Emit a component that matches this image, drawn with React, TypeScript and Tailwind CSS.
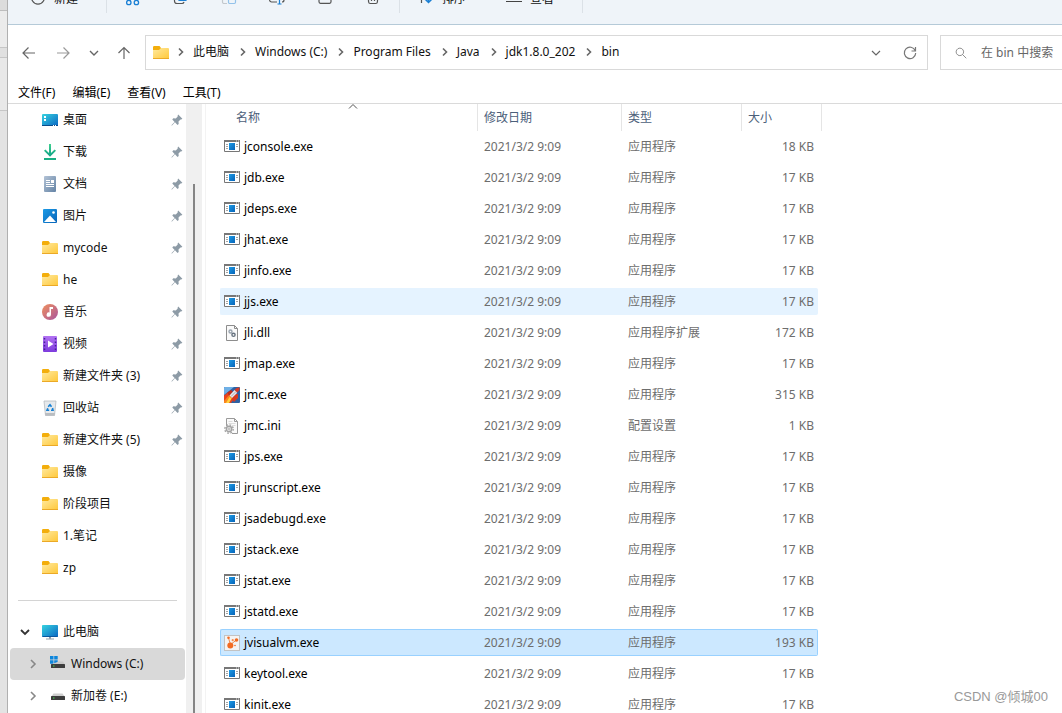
import React from 'react';

type IconKind =
  | 'folder' | 'desktop' | 'download' | 'document' | 'picture' | 'music'
  | 'video' | 'recycle' | 'computer' | 'system-drive' | 'drive';

type FileKind = 'exe' | 'dll' | 'jmc' | 'ini' | 'visualvm';

interface SideItem {
  name: string;
  icon: IconKind;
  pinned?: boolean;
}

interface FileRow {
  name: string;
  kind: FileKind;
  type: string;
  size: string;
  state?: 'hover' | 'selected';
}

const quickAccess: SideItem[] = [
  { name: '桌面', icon: 'desktop', pinned: true },
  { name: '下载', icon: 'download', pinned: true },
  { name: '文档', icon: 'document', pinned: true },
  { name: '图片', icon: 'picture', pinned: true },
  { name: 'mycode', icon: 'folder', pinned: true },
  { name: 'he', icon: 'folder', pinned: true },
  { name: '音乐', icon: 'music', pinned: true },
  { name: '视频', icon: 'video', pinned: true },
  { name: '新建文件夹 (3)', icon: 'folder', pinned: true },
  { name: '回收站', icon: 'recycle', pinned: true },
  { name: '新建文件夹 (5)', icon: 'folder', pinned: true },
  { name: '摄像', icon: 'folder' },
  { name: '阶段项目', icon: 'folder' },
  { name: '1.笔记', icon: 'folder' },
  { name: 'zp', icon: 'folder' }
];

const files: FileRow[] = [
  { name: 'jconsole.exe', kind: 'exe', type: '应用程序', size: '18 KB' },
  { name: 'jdb.exe', kind: 'exe', type: '应用程序', size: '17 KB' },
  { name: 'jdeps.exe', kind: 'exe', type: '应用程序', size: '17 KB' },
  { name: 'jhat.exe', kind: 'exe', type: '应用程序', size: '17 KB' },
  { name: 'jinfo.exe', kind: 'exe', type: '应用程序', size: '17 KB' },
  { name: 'jjs.exe', kind: 'exe', type: '应用程序', size: '17 KB', state: 'hover' },
  { name: 'jli.dll', kind: 'dll', type: '应用程序扩展', size: '172 KB' },
  { name: 'jmap.exe', kind: 'exe', type: '应用程序', size: '17 KB' },
  { name: 'jmc.exe', kind: 'jmc', type: '应用程序', size: '315 KB' },
  { name: 'jmc.ini', kind: 'ini', type: '配置设置', size: '1 KB' },
  { name: 'jps.exe', kind: 'exe', type: '应用程序', size: '17 KB' },
  { name: 'jrunscript.exe', kind: 'exe', type: '应用程序', size: '17 KB' },
  { name: 'jsadebugd.exe', kind: 'exe', type: '应用程序', size: '17 KB' },
  { name: 'jstack.exe', kind: 'exe', type: '应用程序', size: '17 KB' },
  { name: 'jstat.exe', kind: 'exe', type: '应用程序', size: '17 KB' },
  { name: 'jstatd.exe', kind: 'exe', type: '应用程序', size: '17 KB' },
  { name: 'jvisualvm.exe', kind: 'visualvm', type: '应用程序', size: '193 KB', state: 'selected' },
  { name: 'keytool.exe', kind: 'exe', type: '应用程序', size: '17 KB' },
  { name: 'kinit.exe', kind: 'exe', type: '应用程序', size: '17 KB' }
];

const crumbs = ['此电脑', 'Windows (C:)', 'Program Files', 'Java', 'jdk1.8.0_202', 'bin'];
const menus = ['文件(F)', '编辑(E)', '查看(V)', '工具(T)'];

const rowFill = {
  none: 'border-transparent',
  hover: 'border-[#e5f3ff] bg-[#e5f3ff]',
  selected: 'border-[#99d1ff] bg-[#cce8ff]'
};

function Gradients() {
  return (
    <svg width="0" height="0" className="absolute" aria-hidden="true">
      <defs>
        <linearGradient id="g-folder" x1="0" y1="0" x2="1" y2="1">
          <stop offset="0" stopColor="#ffeaa0" />
          <stop offset="1" stopColor="#ffc83a" />
        </linearGradient>
        <linearGradient id="g-screen" x1="0" y1="0" x2="1" y2="1">
          <stop offset="0" stopColor="#36d3e0" />
          <stop offset="1" stopColor="#0b66c3" />
        </linearGradient>
        <linearGradient id="g-doc" x1="0" y1="0" x2="1" y2="1">
          <stop offset="0" stopColor="#b3c3d6" />
          <stop offset="1" stopColor="#6483a5" />
        </linearGradient>
        <linearGradient id="g-blue" x1="0" y1="0" x2="1" y2="1">
          <stop offset="0" stopColor="#1c9be6" />
          <stop offset="1" stopColor="#0763b8" />
        </linearGradient>
        <linearGradient id="g-music" x1="0" y1="0" x2="1" y2="1">
          <stop offset="0" stopColor="#f0905c" />
          <stop offset="1" stopColor="#a9559f" />
        </linearGradient>
        <linearGradient id="g-video" x1="0" y1="0" x2="0" y2="1">
          <stop offset="0" stopColor="#b272f2" />
          <stop offset="1" stopColor="#7d3bdd" />
        </linearGradient>
        <linearGradient id="g-down" x1="0" y1="0" x2="0" y2="1">
          <stop offset="0" stopColor="#3fd08f" />
          <stop offset="1" stopColor="#0fa086" />
        </linearGradient>
      </defs>
    </svg>
  );
}

function PlaceIcon({ kind }: { kind: IconKind }) {
  return (
    <svg width="16" height="16" viewBox="0 0 16 16" className="shrink-0" aria-hidden="true">
      {kind === 'folder' && (
        <>
          <path d="M0 2.200A1.200 1.200 0 0 1 1.200 1h5.300L8 3v3H0z" fill="#f3ae0c" />
          <path d="M0 5h6l2-2h7a1 1 0 0 1 1 1v9a.5.500 0 0 1-.5.500H.5A.5.500 0 0 1 0 13z" fill="url(#g-folder)" />
          <path d="M0 13.500h16" stroke="#eba927" />
        </>
      )}
      {kind === 'desktop' && (
        <>
          <rect y="2" width="16" height="12" rx="1" fill="url(#g-screen)" />
          <path d="M2 4h2v2H2zM2 7h2v2H2z" fill="#fff" />
          <path d="M0 13.500h16" stroke="#0a4d8c" />
          <path d="M11 13.500h1M13 13.500h1" stroke="#fff" />
        </>
      )}
      {kind === 'download' && (
        <>
          <path d="M7 0h2v9l3.600-3.600L14 6.800l-6 6-6-6 1.400-1.400L7 9z" fill="url(#g-down)" />
          <path d="M2 14h12v2H2z" fill="#19ae83" />
        </>
      )}
      {kind === 'document' && (
        <>
          <rect x="2" width="12" height="16" rx="1" fill="url(#g-doc)" />
          <path d="M4 4.500h4M4 6.500h4M4 8.500h8M4 10.500h8" stroke="#fff" />
          <path d="M9 4h3v3H9z" fill="#fff" />
        </>
      )}
      {kind === 'picture' && (
        <>
          <rect x="1" y="1" width="14" height="14" rx="1" fill="url(#g-blue)" />
          <path d="M2 14l6-6.500L14 14z" fill="#fff" />
          <circle cx="11.500" cy="4.500" r="1.300" fill="#fff" />
        </>
      )}
      {kind === 'music' && (
        <>
          <circle cx="8" cy="8" r="8" fill="url(#g-music)" />
          <path d="M7.500 3h3.500v2H9v5.500a2.200 2.200 0 1 1-1.500-2z" fill="#fff" />
        </>
      )}
      {kind === 'video' && (
        <>
          <rect x="1" width="14" height="16" rx="1" fill="url(#g-video)" />
          <path d="M6 4.500L11.500 8 6 11.500z" fill="#fff" />
          <path d="M2.500 2v12M13.500 2v12" stroke="#46209a" strokeWidth="1.500" strokeDasharray="1.500 2" />
        </>
      )}
      {kind === 'recycle' && (
        <>
          <path d="M2 1h12l-1.500 14.500h-9z" fill="#e6e9ec" stroke="#b5babf" strokeWidth=".8" />
          <path d="M3 13h10l-.4 2.500H3.400z" fill="#b9bdc1" />
          <path d="M6.200 6.800L8 4.800l1.500 2M10.500 8l.5 2.300H9M7.200 10.300H5l.8-2.100" fill="none" stroke="#1580d4" strokeWidth="1.600" />
        </>
      )}
      {kind === 'computer' && (
        <>
          <path d="M7 12h2v3H7z" fill="#8b98a5" />
          <path d="M4 15h8" stroke="#a5b0ba" strokeWidth="1.200" />
          <rect y="1" width="16" height="12" rx=".8" fill="url(#g-screen)" />
          <path d="M.5 12.500h15" stroke="#0b579e" />
        </>
      )}
      {kind === 'system-drive' && (
        <>
          <path d="M0 0h3.500v3.500H0zM4.200 0h3.500v3.500H4.200zM0 4.200h3.500v3.500H0zM4.200 4.200h3.500v3.500H4.200z" fill="#0d86dc" />
          <path d="M8.500 5.500h4.500L15 8.500H1z" fill="#c8c8c8" />
          <rect x="1" y="8" width="14" height="4" rx=".6" fill="#3d3d3d" />
          <path d="M3 10h1.500" stroke="#47e052" />
        </>
      )}
      {kind === 'drive' && (
        <>
          <path d="M3.500 5.500h9L15 9H1z" fill="#cfcfcf" />
          <rect x="1" y="8" width="14" height="4" rx=".6" fill="#3d3d3d" />
          <path d="M3 10h1.500" stroke="#47e052" />
        </>
      )}
    </svg>
  );
}

function FileIcon({ kind }: { kind: FileKind }) {
  return (
    <svg width="16" height="16" viewBox="0 0 16 16" className="shrink-0" aria-hidden="true">
      {kind === 'exe' && (
        <>
          <path d="M.5 1.500h15v11H.5z" fill="#fff" stroke="#777" />
          <path d="M0 1h16v2H0z" fill="#777" />
          <path d="M2 5.500h2M2 7.500h2M2 9.500h2M12 5.500h2M12 7.500h2" stroke="#a5a5a5" />
          <path d="M12 2h1M14 2h1" stroke="#fff" strokeWidth=".8" />
          <path d="M5 4h6v7H5z" fill="url(#g-blue)" />
        </>
      )}
      {kind === 'dll' && (
        <>
          <path d="M2.500.5h8l3 3v12h-11z" fill="#fafafa" stroke="#8d8d8d" />
          <path d="M10.500.5v3h3" fill="none" stroke="#8d8d8d" />
          <circle cx="6.500" cy="6.500" r="1.500" fill="none" stroke="#9aa4af" strokeWidth="1.400" />
          <circle cx="9.500" cy="9.800" r="1.600" fill="none" stroke="#65717e" strokeWidth="1.400" />
        </>
      )}
      {kind === 'ini' && (
        <>
          <path d="M2.500 8V.5h8l3 3v12H8" fill="#fafafa" stroke="#9a9a9a" />
          <path d="M10.500.5v3h3" fill="none" stroke="#9a9a9a" />
          <path d="M4.500 3.500h4M4.500 5.500h7M8 7.500h3.500" stroke="#dcdcdc" />
          <circle cx="5" cy="11" r="4.200" fill="none" stroke="#a3a3a3" strokeWidth="1.400" strokeDasharray="1.700 1.600" />
          <circle cx="5" cy="11" r="2.700" fill="#ececec" stroke="#a3a3a3" strokeWidth="1.400" />
          <circle cx="5" cy="11" r="1" fill="#fff" stroke="#8f8f8f" strokeWidth=".6" />
        </>
      )}
      {kind === 'jmc' && (
        <>
          <rect width="16" height="16" rx="1" fill="#2f62a3" />
          <path d="M0 1a1 1 0 0 1 1-1h9L0 8z" fill="#6fb0e6" />
          <path d="M0 8.500L4.500 5l6 6L7 16H0z" fill="#e8431c" />
          <path d="M0 14l5-6 3 3-4 5H0z" fill="#f9861f" />
          <path d="M2 16l3.500-6 2 1.500L5 16z" fill="#ffd23f" />
          <path d="M3.500 5.500L7 3l2 2-4 4z" fill="#c22f1e" />
          <path d="M10.500 7.500L14 7v4l-4 4-2-3z" fill="#d8391f" />
          <path d="M5.500 8.500L10.500 3l2.500.5V6l-5 5z" fill="#eceaec" />
          <path d="M10.500 3l2.200-2 3-.7-.5 3-2.200 2.500z" fill="#d63b25" />
          <path d="M7 9.500l5-5" stroke="#9b99a2" strokeWidth=".8" />
        </>
      )}
      {kind === 'visualvm' && (
        <>
          <rect x=".5" y=".5" width="15" height="15" fill="#f4f4f4" stroke="#c3c3c3" />
          <path d="M6.500 9.500L4.500 3M6.500 9.500L12.500 5" stroke="#f08a4e" />
          <circle cx="6.300" cy="10.500" r="3" fill="#f26b22" />
          <circle cx="4.500" cy="2.800" r="1.300" fill="#f26b22" />
          <circle cx="12.500" cy="5" r="1.800" fill="#f26b22" />
          <circle cx="8.700" cy="5.200" r="1.100" fill="#f58a4d" />
          <circle cx="11" cy="10.500" r=".8" fill="#f26b22" />
        </>
      )}
    </svg>
  );
}

function PinIcon() {
  return (
    <svg width="12" height="12" viewBox="0 0 12 12" className="shrink-0" aria-hidden="true">
      <path d="M7.200.6l4.200 4.100-1.200.9-.7-.1-2 2 .2 2.400-1.200 1L4 8.300 1 11.400l-.5.1.1-.5 3-3.100L1.300 5.400l1-1.100 2.500.2 1.900-2-.1-.8z" fill="#8d9ba6" />
    </svg>
  );
}

function Line({ d, color = '#666', width = 1.2, size = 16 }: { d: string; color?: string; width?: number; size?: number }) {
  return (
    <svg width={size} height={size} viewBox="0 0 16 16" fill="none" stroke={color} strokeWidth={width} className="shrink-0" aria-hidden="true">
      <path d={d} />
    </svg>
  );
}

function Toolbar() {
  return (
    <div className="flex h-[25px] shrink-0 items-end overflow-hidden border-b border-[#b5cad8] bg-[#eff4f9] pb-[11px]">
      <div className="flex h-7 shrink-0 items-center border-r border-[#dbe1e7] pl-[22px] pr-7">
        <button className="flex items-center gap-2">
          <Line d="M8 .5a6.300 6.300 0 1 1-.01 0zM8 4v4M6 6h4" color="#555" />
          新建
        </button>
      </div>
      <div className="flex h-7 shrink-0 items-center gap-8 border-r border-[#dbe1e7] px-[18px]">
        <button aria-label="剪切">
          <svg width="16" height="16" viewBox="0 0 16 16" fill="none" aria-hidden="true">
            <path d="M4 0l6.500 9.500M12 0L5.500 9.500" stroke="#555" />
            <circle cx="3.800" cy="11.500" r="2.200" stroke="#1a7fd4" strokeWidth="1.300" />
            <circle cx="11.400" cy="11.500" r="2.200" stroke="#1a7fd4" strokeWidth="1.300" />
          </svg>
        </button>
        <button aria-label="复制">
          <svg width="16" height="16" viewBox="0 0 16 16" fill="none" aria-hidden="true">
            <path d="M3 3.500A2 2 0 0 0 1.500 5.500V10a2.500 2.500 0 0 0 2.500 2.500h5a2 2 0 0 0 2-1.500" stroke="#555" strokeWidth="1.200" />
            <rect x="5" y="0" width="9" height="10" rx="1.500" fill="#1a7fd4" />
          </svg>
        </button>
        <button aria-label="粘贴">
          <svg width="16" height="16" viewBox="0 0 16 16" fill="none" aria-hidden="true">
            <path d="M11 2.500H3A1.500 1.500 0 0 0 1.500 4v7A1.500 1.500 0 0 0 3 12.500h3" stroke="#c3c8cd" strokeWidth="1.200" />
            <rect x="7.500" y="4.500" width="7" height="8" rx="1.200" stroke="#93c2ea" strokeWidth="1.200" />
          </svg>
        </button>
        <button aria-label="重命名">
          <svg width="16" height="16" viewBox="0 0 16 16" fill="none" aria-hidden="true">
            <path d="M8 3.500H2.500A2 2 0 0 0 .6 5.500V9a2 2 0 0 0 2 2H8M13 3.500a2 2 0 0 1 2 2V9a2 2 0 0 1-2 2" stroke="#555" strokeWidth="1.200" />
            <path d="M10.500 1v11.500M8.500 13h4" stroke="#1a7fd4" strokeWidth="1.200" />
          </svg>
        </button>
        <button aria-label="共享">
          <Line d="M7 3H3.500A1.700 1.700 0 0 0 2 4.700v6A1.700 1.700 0 0 0 3.500 12.400h9a1.700 1.700 0 0 0 1.500-1.700V9" color="#555" />
        </button>
        <button aria-label="删除">
          <Line d="M2 2h12M3 2l.6 9a1.700 1.700 0 0 0 1.600 1.500h5.600a1.700 1.700 0 0 0 1.600-1.500l.6-9M6.500 5.500v4.500M9.500 5.500v4.500" color="#555" />
        </button>
      </div>
      <div className="flex h-7 shrink-0 items-center gap-10 border-r border-[#dbe1e7] pl-[18px] pr-7">
        <button className="flex items-center gap-2">
          <svg width="16" height="16" viewBox="0 0 16 16" fill="none" strokeWidth="1.200" aria-hidden="true">
            <path d="M3.500 12V2M.5 5l3-3 3 3" stroke="#555" />
            <path d="M10.500 1v10.500M7.500 8.500l3 3 3-3" stroke="#1a7fd4" strokeWidth="1.500" />
          </svg>
          排序
        </button>
        <button className="flex items-center gap-2">
          <Line d="M0 2.500h16M0 6.500h16M0 10.500h16" color="#444" />
          查看
        </button>
      </div>
    </div>
  );
}

function AddressRow() {
  return (
    <div className="flex h-[45px] shrink-0 items-end pl-1">
      <div className="flex h-[35px] shrink-0 items-center">
        <button aria-label="后退" className="flex h-8 w-[34px] items-center justify-center">
          <Line d="M14 8H2.500M7.500 2.500L2 8l5.500 5.500" />
        </button>
        <button aria-label="前进" className="flex h-8 w-[34px] items-center justify-center">
          <Line d="M2 8h11.500M8.500 2.500L14 8l-5.500 5.500" color="#999" />
        </button>
        <button aria-label="最近位置" className="flex h-8 w-7 items-center justify-center">
          <Line d="M4 6l4 4 4-4" width={1.4} />
        </button>
        <button aria-label="上移" className="flex h-8 w-8 items-center justify-center">
          <Line d="M8 14V2.500M2.500 8L8 2.500 13.500 8" />
        </button>
      </div>
      <div className="ml-[5px] flex h-[35px] min-w-0 flex-1 items-center border border-[#d9d9d9] pl-[7px]">
        <PlaceIcon kind="folder" />
        <nav aria-label="路径" className="flex min-w-0 flex-1 items-center pb-[2px]">
          {crumbs.map((crumb, i) => (
            <div key={crumb} className="flex items-center">
              <span className={`flex ${i === 0 ? 'w-6 pl-1' : 'w-[26px] pl-[6px]'}`}>
                <Line d="M6 4.500L9.500 8 6 11.500" width={1.6} />
              </span>
              <button className="whitespace-nowrap">{crumb}</button>
            </div>
          ))}
        </nav>
        <button aria-label="展开" className="flex h-8 w-[34px] items-center justify-center">
          <Line d="M4 6l4 4 4-4" />
        </button>
        <button aria-label="刷新" className="flex h-8 w-[34px] items-center justify-center">
          <Line d="M13.200 5.500A5.700 5.700 0 1 0 13.700 8M13.500 2v4h-4" color="#777" />
        </button>
      </div>
      <label className="ml-3 flex h-[35px] w-[122px] shrink-0 items-center gap-[14px] border border-r-0 border-[#d9d9d9] pl-[14px]">
        <Line d="M6.500 1.500a5 5 0 1 1-.01 0zM10 10l5 5" color="#858585" size={12} />
        <input
          type="text"
          aria-label="搜索"
          placeholder="在 bin 中搜索"
          className="w-20 bg-transparent leading-4 outline-none placeholder:text-[#666]"
        />
      </label>
    </div>
  );
}

function Sidebar() {
  return (
    <aside className="flex w-[198px] shrink-0 overflow-hidden border-r border-[#f3f3f3]">
      <nav aria-label="导航窗格" className="w-[178px] shrink-0">
        <ul>
          {quickAccess.map((item) => (
            <li key={item.name}>
              <a href="#" className="flex h-8 items-center gap-[5px] pl-[34px] pr-[3px]">
                <PlaceIcon kind={item.icon} />
                <span className="flex-1 whitespace-nowrap">{item.name}</span>
                {item.pinned && <PinIcon />}
              </a>
            </li>
          ))}
        </ul>
        <div className="flex h-8 items-center pl-[10px] pr-[9px]">
          <hr className="w-full border-[#d4d4d4]" />
        </div>
        <ul>
          <li>
            <a href="#" className="flex h-8 items-center gap-[5px] pl-[9px]">
              <Line d="M4 6l4 4 4-4" color="#333" width={1.8} />
              <span className="ml-1">
                <PlaceIcon kind="computer" />
              </span>
              此电脑
            </a>
          </li>
          <li>
            <a href="#" className="ml-[2px] mr-px flex h-8 items-center gap-[5px] rounded-sm bg-[#d9d9d9] pl-[15px]">
              <Line d="M6 4l4 4-4 4" color="#888" width={1.6} />
              <span className="ml-1">
                <PlaceIcon kind="system-drive" />
              </span>
              Windows (C:)
            </a>
          </li>
          <li>
            <a href="#" className="ml-[2px] mr-px flex h-8 items-center gap-[5px] pl-[15px]">
              <Line d="M6 4l4 4-4 4" color="#888" width={1.6} />
              <span className="ml-1">
                <PlaceIcon kind="drive" />
              </span>
              新加卷 (E:)
            </a>
          </li>
        </ul>
      </nav>
      {/* Scroll track */}
      <div className="flex w-4 shrink-0 justify-center bg-[#f0f0f0] pt-20">
        <div className="w-[2px] bg-[#858585]" />
      </div>
    </aside>
  );
}

function FileTable() {
  return (
    <main className="min-w-0 flex-1 overflow-hidden pl-[14px]">
      <table className="w-[602px] table-fixed border-collapse">
        <colgroup>
          <col className="w-[257px]" />
          <col className="w-36" />
          <col className="w-[120px]" />
          <col className="w-[81px]" />
        </colgroup>
        <thead>
          <tr className="text-left text-[#4c607a]">
            <th className="h-[27px] p-0 font-normal">
              <div className="relative ml-2 flex h-[27px] items-center pl-2">
                名称
                <svg width="10" height="5" viewBox="0 0 10 5" className="absolute left-1/2 top-0 -translate-x-1/2" fill="none" aria-hidden="true">
                  <path d="M1 4.500l4-4 4 4" stroke="#555" />
                </svg>
              </div>
            </th>
            <th className="p-0 font-normal">
              <div className="flex h-[27px] items-center border-l border-[#e5e5e5] pl-[6px]">修改日期</div>
            </th>
            <th className="p-0 font-normal">
              <div className="flex h-[27px] items-center border-l border-[#e5e5e5] pl-[6px]">类型</div>
            </th>
            <th className="p-0 font-normal">
              <div className="flex h-[27px] items-center border-x border-[#e5e5e5] pl-[6px]">大小</div>
            </th>
          </tr>
        </thead>
        <tbody>
          {files.map((file) => {
            const fill = rowFill[file.state ?? 'none'];
            return (
              <tr key={file.name} className="text-[#6d6d6d]">
                <td className="p-0 py-[2px]">
                  <div className={`flex h-[27px] items-center gap-1 rounded-l-xs border border-r-0 pl-[3px] text-black ${fill}`}>
                    <FileIcon kind={file.kind} />
                    {file.name}
                  </div>
                </td>
                <td className="p-0 py-[2px]">
                  <div className={`flex h-[27px] items-center border-y pl-[7px] ${fill}`}>2021/3/2 9:09</div>
                </td>
                <td className="p-0 py-[2px]">
                  <div className={`flex h-[27px] items-center border-y pl-[7px] ${fill}`}>{file.type}</div>
                </td>
                <td className="p-0 py-[2px] pr-1">
                  <div className={`flex h-[27px] items-center justify-end rounded-r-xs border border-l-0 pr-[3px] ${fill}`}>
                    {file.size}
                  </div>
                </td>
              </tr>
            );
          })}
        </tbody>
      </table>
    </main>
  );
}

export default function App() {
  return (
    <div className="relative flex h-screen overflow-hidden bg-white font-['Noto_Sans','Noto_Sans_CJK_SC',sans-serif] text-[12px] leading-4 text-[#111]">
      <Gradients />

      {/* Edge of the window behind */}
      <div className="flex w-2 shrink-0 flex-col border-r border-[#b0b0b0] bg-[#e3e3e3]">
        <div className="h-[11px] border-b border-[#bdbdbd] bg-[#dcdcdc]" />
        <div className="h-[37px] border-b border-[#c6c6c6] bg-[#ebebeb]" />
        <div className="h-[10px] border-b border-[#c6c6c6] bg-[#e0e0e0]" />
        <div className="h-[53px] border-b border-[#c6c6c6] bg-[#e8e8e8]" />
      </div>

      <div className="flex min-w-0 flex-1 flex-col">
        <Toolbar />
        <AddressRow />
        <div className="flex h-[34px] shrink-0 items-end gap-[17px] border-b border-[#dadada] pb-[2px] pl-[10px] text-black">
          {menus.map((menu) => (
            <button key={menu}>{menu}</button>
          ))}
        </div>
        <div className="flex min-h-0 flex-1">
          <Sidebar />
          <FileTable />
        </div>
      </div>

      <div className="absolute bottom-[7px] right-[14px] font-['Liberation_Sans','Noto_Sans_CJK_SC',sans-serif] text-[13px] leading-[18px] text-[#999]">
        CSDN @倾城00
      </div>
    </div>
  );
}
